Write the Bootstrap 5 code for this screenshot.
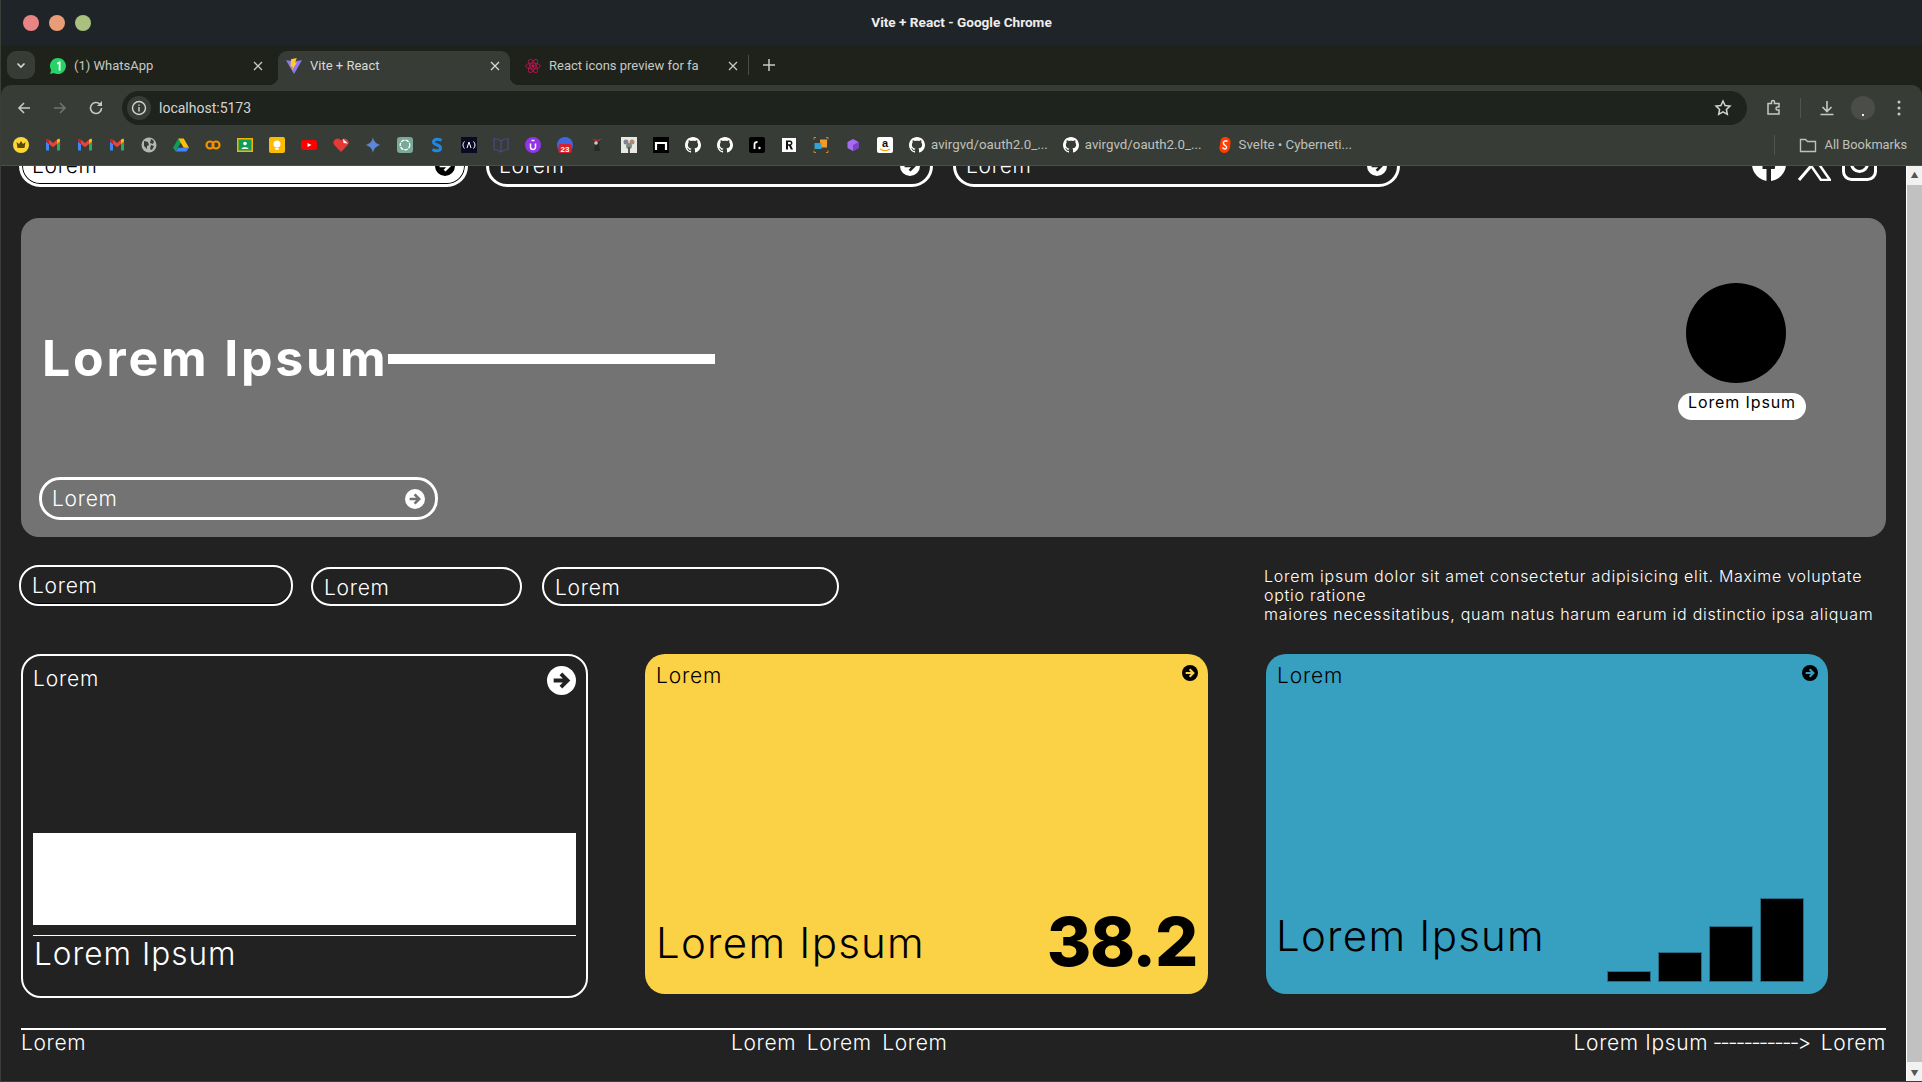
<!doctype html>
<html lang="en">
<head>
<meta charset="utf-8">
<title>Vite + React</title>
<link href="https://cdn.jsdelivr.net/npm/bootstrap@5.3.0/dist/css/bootstrap.min.css" rel="stylesheet">
<style>
html,body{height:100%;margin:0;overflow:hidden;background:#222}
body{font-family:Inter,"Noto Sans",sans-serif;color:#fff}
.win{height:1082px;border-left:1px solid #3a3d38;border-bottom:1px solid #3a3d38}
.chrome{font-family:Roboto,"Noto Sans",sans-serif;color:#c7c9c4;flex:none;background:#1e221b}
.titlebar{height:45px;background:#1f2428;position:relative;justify-content:center;align-items:center;font-size:13.6px;font-weight:700;color:#eee}
.lights{position:absolute;left:22px;top:15px;gap:10px}
.lights i{display:block;width:16px;height:16px;border-radius:50%}
.tabstrip{height:40px;background:#1e221b;padding:6px 0 0 6px;font-size:13px}
.chev{width:28px;height:28px;border-radius:9px;background:#383c36;margin-right:6px}
.tabx{height:34px;padding:0 11px 4px 8px;gap:8px;border-radius:9px 9px 0 0;position:relative}
.tabx.on{background:#383c36;color:#d8d9d6}
.tabx.on::before,.tabx.on::after{content:"";position:absolute;bottom:0;width:9px;height:9px}
.tabx.on::before{left:-9px;background:radial-gradient(circle at 0 0,transparent 9px,#383c36 9.500px)}
.tabx.on::after{right:-9px;background:radial-gradient(circle at 100% 0,transparent 9px,#383c36 9.500px)}
.tabx .ttl{flex:1;white-space:nowrap;overflow:hidden}
.tabx svg{flex:none}
.t1{width:237px;padding-left:9px;padding-right:15px}.t2{width:232px;padding-right:10px}.t3{width:238px;padding-left:15px;padding-right:10px}
.newt{border-left:1px solid #4a4d48;height:20px;width:1px;margin:0 10px 6px 0}
.toolbar{height:40px;background:#383c36;padding:6px 0 0 5px;border-radius:10px 10px 0 0}
.navb{width:36px;justify-content:center}
.addr{height:34px;background:#1f231d;border-radius:17px;margin-left:8px;width:1625px;padding:0 15px 0 5px;font-size:14px;color:#d4d5d2}
.infoc{width:24px;height:24px;border-radius:50%;background:#383c36;margin-right:8px;justify-content:center}
.tools{margin-left:18px;gap:0}
.bmbar{height:41px;background:#383c36;border-bottom:1px solid #4b4e49;padding:0 0 0 4px;font-size:13.3px;color:#bfc1bc}
.bm{width:32px;flex:none;justify-content:center;display:flex}
.bmt{gap:6px;margin-right:15px;white-space:nowrap}
.allb{margin-left:auto;gap:8px;padding-right:15px;white-space:nowrap;font-size:12.8px}
.allsep{width:1px;height:20px;background:#50534e;margin-right:16px}
.stage{min-height:0}
.pagex{flex:1;overflow:hidden;background:#222;padding:0 20px 0 18px;min-width:0;letter-spacing:.045em;font-variant-ligatures:none;font-feature-settings:"calt" 0,"liga" 0;font-weight:300}
.scrollx{width:16px;flex:none;background:#f1f1f1;border-left:1px solid #fff}
.scrollx .thumb{flex:1;background:#c1c1c1;margin:2px 0}
.arrowx{height:17px;justify-content:center;align-items:center;color:#555;font-size:8px;line-height:1}
.navrow{margin-top:-22px;height:43px;gap:18px;padding-right:9px}
.bigpill{width:447px;height:43px;border:3px solid #fff;border-radius:21px;padding:0 10px 0 10px;font-size:21px;flex:none}
.bigpill.sel{background:#fff;color:#000;border-width:3px;box-shadow:inset 0 0 0 1px #000;width:449px;margin-right:0}
.socials{margin-left:auto;gap:11px;align-self:flex-end;margin-bottom:6px}
.hero{margin:31px 0 0 2px;height:319px;background:#737373;border-radius:18px;padding:0 80px 17px 18px}
.herotitle{font-size:50px;font-weight:700;line-height:58px;margin:0;letter-spacing:.056em;padding-left:3px}
.heroline{width:327px;height:10px;background:#fff;margin-top:2px}
.headrow{margin-top:111px}
.herobtn{width:399px;margin-top:auto}
.avatar{width:100px;height:100px;border-radius:50%;background:#000;margin:65px 0 10px 8px}
.namepill{width:128px;height:27px;background:#fff;color:#000;border-radius:14px;font-size:16px;line-height:19px;text-align:center;padding-top:0;letter-spacing:.055em;font-weight:400}
.midrow{margin-top:28px;height:61px}
.tag{height:39px;border:2px solid #fff;border-radius:20px;padding-left:11px;font-size:21px;line-height:37px;flex:none;margin-top:2px}
.tag.a{width:274px;height:41px;margin-top:0;box-shadow:inset 0 -1px 0 #000;margin-right:18px}
.tag.b{width:211px;margin-right:20px}
.tag.c{width:297px}
.para{margin:0 0 0 auto;width:622px;padding-right:6px;font-size:16px;line-height:19px;margin-top:2px;letter-spacing:.73px}
.cards{margin-top:28px;margin-left:2px}
.cardx{flex:none;position:relative;border-radius:20px}
.cardx .lab{font-size:21px;line-height:26px;letter-spacing:.04em}
.cone{width:567px;height:344px;border:2px solid #fff;padding:10px;margin-right:57px}
.cone .arrbig{position:absolute;right:10px;top:10px}
.whiteb{height:92px;background:#fff;margin-top:141px}
.onehr{height:1px;background:#fff;margin-top:10px}
.onet{font-size:31.5px;line-height:36px;margin-top:0;padding-left:1px;letter-spacing:.032em}
.csol{width:563px;height:340px;color:#000;padding:9px 11px}
.csol .arrsm{position:absolute;right:10px;top:11px}
.yel{background:#fbd146;margin-right:58px}
.blu{background:#37a0c1;width:562px}
.big{font-size:42px;line-height:48px;letter-spacing:.03em}
.yel .big{padding-bottom:9px}
.yel .lowr{position:absolute;left:11px;right:11px;bottom:18px}
.num{font-size:68px;font-weight:800;line-height:70px;letter-spacing:-.02em}
.blu .lowt{position:absolute;left:10px;bottom:34px}
.bars{position:absolute;left:341px;bottom:12px;height:83px;gap:7px}
.bars i{display:block;width:44px;background:#000;border:1px solid #2a6e85}
.footx{margin:30px 0 0 2px;border-top:2px solid #fff;font-size:21px;line-height:26px;padding-top:0;position:relative;letter-spacing:.03em}
.fmid{position:absolute;left:710px;top:0;gap:10.500px}
.dashes{letter-spacing:-1.800px;margin:0 5px 0 -2px}
</style>
</head>
<body>
<svg width="0" height="0" class="position-absolute">
<symbol id="arr" viewBox="0 0 24 24"><circle cx="12" cy="12" r="12" fill="currentColor"/><path d="M5.500 12h11M11.500 6.500l5.500 5.500-5.500 5.500" fill="none" stroke="var(--ar,#222)" stroke-width="3.200"/></symbol>
<symbol id="gh" viewBox="0 0 16 16"><path fill="#fff" d="M8 0C3.600 0 0 3.600 0 8c0 3.500 2.300 6.500 5.500 7.600.4.100.5-.2.500-.4v-1.400c-2.200.5-2.700-1-2.700-1-.4-.9-.9-1.200-.9-1.200-.7-.5.100-.5.100-.5.800.1 1.200.8 1.200.8.700 1.200 1.900.9 2.300.7.100-.5.300-.9.500-1.100-1.800-.2-3.600-.9-3.600-4 0-.9.300-1.600.8-2.100-.1-.2-.4-1 .1-2.100 0 0 .7-.2 2.200.8.600-.2 1.300-.3 2-.3s1.400.1 2 .3c1.500-1 2.200-.8 2.200-.8.400 1.100.2 1.900.1 2.100.5.600.8 1.300.8 2.100 0 3.100-1.900 3.700-3.700 3.900.3.3.6.8.6 1.500v2.200c0 .2.100.5.600.4C13.700 14.500 16 11.500 16 8c0-4.400-3.600-8-8-8z"/></symbol>
<symbol id="gm" viewBox="0 0 16 16"><path fill="#4285f4" d="M1 13.500h3V7L1 4.500z"/><path fill="#34a853" d="M12 13.500h3v-9L12 7z"/><path fill="#ea4335" d="M4 7V2.800L8 6l4-3.200V7L8 10.200z"/><path fill="#fbbc04" d="M12 2.800 13 2c1-.7 2-.1 2 1v1.500L12 7z"/><path fill="#c5221f" d="M1 4.500V3c0-1.100 1-1.700 2-1l1 .8V7z"/></symbol>
</svg>
<div class="win d-flex flex-column">
<header class="chrome">
  <div class="titlebar d-flex">
    <div class="lights d-flex"><i style="background:#e98484"></i><i style="background:#e89d77"></i><i style="background:#a9c07f"></i></div>
    Vite + React - Google Chrome
  </div>
  <div class="tabstrip d-flex align-items-start">
    <div class="chev d-flex align-items-center justify-content-center"><svg width="12" height="12" viewBox="0 0 12 12"><path d="M2.500 4.500 6 8l3.500-3.500" fill="none" stroke="#d8d9d6" stroke-width="1.600"/></svg></div>
    <div class="tabx t1 d-flex align-items-center"><svg width="16" height="16" viewBox="0 0 16 16"><path fill="#25d366" d="M8 0a8 8 0 0 0-6.800 12.200L0 16l3.900-1.100A8 8 0 1 0 8 0z"/><path fill="#fff" d="M8.700 12.500V5.700L7 6.500V5L9 3.500h1.500v9z"/></svg><span class="ttl">(1) WhatsApp</span><svg width="10" height="10" viewBox="0 0 10 10"><path d="M1 1l8 8M9 1 1 9" stroke="#c7c9c4" stroke-width="1.300"/></svg></div>
    <div class="tabx t2 on d-flex align-items-center"><svg width="16" height="16" viewBox="0 0 16 16"><path fill="#8d78f8" d="M0 2.200 8 16 16 2.200l-4 .6-4 .5-4-.5z"/><path fill="#ffc928" d="M10.800 0 5 1.300l-.5 7.500 2-.5-.4 4 4.900-7.800-2.100.4z"/></svg><span class="ttl">Vite + React</span><svg width="10" height="10" viewBox="0 0 10 10"><path d="M1 1l8 8M9 1 1 9" stroke="#d8d9d6" stroke-width="1.300"/></svg></div>
    <div class="tabx t3 d-flex align-items-center"><svg width="16" height="16" viewBox="0 0 16 16" fill="none" stroke="#b3154e" stroke-width=".9"><circle cx="8" cy="8" r="1.300" fill="#b3154e"/><ellipse cx="8" cy="8" rx="7.300" ry="2.900"/><ellipse cx="8" cy="8" rx="7.300" ry="2.900" transform="rotate(60 8 8)"/><ellipse cx="8" cy="8" rx="7.300" ry="2.900" transform="rotate(120 8 8)"/></svg><span class="ttl">React icons preview for fa</span><svg width="10" height="10" viewBox="0 0 10 10"><path d="M1 1l8 8M9 1 1 9" stroke="#c7c9c4" stroke-width="1.300"/></svg></div>
    <div class="newt mt-1"></div>
    <svg class="mt-1" width="20" height="20" viewBox="0 0 20 20"><path d="M10 4v12M4 10h12" stroke="#c7c9c4" stroke-width="1.500"/></svg>
  </div>
  <div class="toolbar d-flex align-items-center">
    <div class="navb d-flex"><svg width="16" height="16" viewBox="0 0 16 16" fill="none" stroke="#c7c9c4" stroke-width="1.600"><path d="M14 8H3M8 3 3 8l5 5"/></svg></div>
    <div class="navb d-flex"><svg width="16" height="16" viewBox="0 0 16 16" fill="none" stroke="#71746e" stroke-width="1.600"><path d="M2 8h11M8 3l5 5-5 5"/></svg></div>
    <div class="navb d-flex"><svg width="16" height="16" viewBox="0 0 16 16" fill="none" stroke="#c7c9c4" stroke-width="1.600"><path d="M13.500 8A5.500 5.500 0 1 1 11.800 4"/><path fill="#c7c9c4" stroke="none" d="M14 1v5H9z"/></svg></div>
    <div class="addr d-flex align-items-center">
      <div class="infoc d-flex align-items-center"><svg width="16" height="16" viewBox="0 0 16 16" fill="none" stroke="#d4d5d2" stroke-width="1.400"><circle cx="8" cy="8" r="6.500"/><path d="M8 7v4.500M8 4.500v1.300"/></svg></div>
      localhost:5173
      <svg class="ms-auto" width="18" height="18" viewBox="0 0 18 18" fill="none" stroke="#d4d5d2" stroke-width="1.500"><path d="m9 2 2.100 4.500 4.900.6-3.600 3.300.9 4.900L9 12.900l-4.300 2.400.9-4.900L2 7.100l4.900-.6z"/></svg>
    </div>
    <div class="tools d-flex align-items-center">
      <svg width="18" height="18" viewBox="0 0 18 18" fill="none" stroke="#c7c9c4" stroke-width="1.500"><path d="M3 4.500h3.500V3a1.500 1.500 0 0 1 3 0v1.500H14V8h-1.500a1.500 1.500 0 0 0 0 3H14v4H3z"/></svg>
      <div style="width:1px;height:20px;background:#50534e;margin:0 17px 0 17px"></div>
      <svg width="18" height="18" viewBox="0 0 18 18" fill="none" stroke="#c7c9c4" stroke-width="1.600"><path d="M9 2v10M4.500 8 9 12.500 13.500 8M2.500 15.500h13"/></svg>
      <div class="d-flex align-items-end justify-content-center" style="width:24px;height:24px;border-radius:50%;background:#4a4d48;margin-left:15px"><i class="d-block mb-1" style="width:2px;height:2px;background:#eee"></i></div>
      <svg style="margin-left:22px" width="4" height="16" viewBox="0 0 4 16" fill="#c7c9c4"><circle cx="2" cy="2" r="1.500"/><circle cx="2" cy="8" r="1.500"/><circle cx="2" cy="14" r="1.500"/></svg>
    </div>
  </div>
  <div class="bmbar d-flex align-items-center">
    <span class="bm"><svg width="16" height="16" viewBox="0 0 16 16"><circle cx="8" cy="8" r="8" fill="#fdd835"/><path fill="#5d4a06" d="M3.500 5 6 7l2-3 2 3 2.500-2-1 6h-7z"/></svg></span>
    <span class="bm"><svg width="16" height="16"><use href="#gm"/></svg></span>
    <span class="bm"><svg width="16" height="16"><use href="#gm"/></svg></span>
    <span class="bm"><svg width="16" height="16"><use href="#gm"/></svg></span>
    <span class="bm"><svg width="16" height="16" viewBox="0 0 16 16"><circle cx="8" cy="8" r="7.500" fill="#b4b6b3"/><path fill="#383c36" d="M3 4l4 1 1 3-2 1v3L3 9zm7-2 3 2-1 3-3-1zm0 6 3 1-2 4-2-1z"/></svg></span>
    <span class="bm"><svg width="16" height="16" viewBox="0 0 16 16"><path fill="#0f9d58" d="M5.300 1.500 0 10.700l2.600 3.800L8 5.500z"/><path fill="#4285f4" d="M2.600 14.500h10.700l2.700-3.800H5.300z"/><path fill="#ffc107" d="M5.300 1.500h5.400l5.300 9.200h-5.300z"/></svg></span>
    <span class="bm"><svg width="16" height="16" viewBox="0 0 16 16" fill="none" stroke="#f29100" stroke-width="2.200"><circle cx="5" cy="8" r="3.500"/><circle cx="11" cy="8" r="3.500"/></svg></span>
    <span class="bm"><svg width="16" height="16" viewBox="0 0 16 16"><rect y="1" width="16" height="14" fill="#f4b400"/><rect x="1.500" y="2.500" width="13" height="11" fill="#0f9d58"/><circle cx="8" cy="6.500" r="1.800" fill="#fff"/><path fill="#fff" d="M4.500 12c0-2.500 7-2.500 7 0z"/></svg></span>
    <span class="bm"><svg width="16" height="16" viewBox="0 0 16 16"><rect width="16" height="16" rx="2" fill="#fbbc04"/><circle cx="8" cy="7" r="3.500" fill="#fff"/><rect x="6.300" y="11" width="3.400" height="1.800" fill="#fff"/></svg></span>
    <span class="bm"><svg width="16" height="16" viewBox="0 0 16 16"><rect y="3" width="16" height="10" rx="2.500" fill="#f00"/><path fill="#fff" d="m6.500 6 4 2-4 2z"/></svg></span>
    <span class="bm"><svg width="16" height="16" viewBox="0 0 16 16"><path fill="#e53935" d="M8 15 1.200 8A4 4 0 0 1 8 3.500 4 4 0 0 1 14.800 8z"/><path fill="#fff" d="M10 2 15 6.500 10.500 6z"/></svg></span>
    <span class="bm"><svg width="16" height="16" viewBox="0 0 16 16"><path fill="#5c87d6" d="M8 0c.6 4.500 3.400 7.300 8 8-4.600.7-7.400 3.500-8 8-.6-4.500-3.400-7.300-8-8 4.600-.7 7.400-3.500 8-8z"/></svg></span>
    <span class="bm"><svg width="16" height="16" viewBox="0 0 16 16"><rect width="16" height="16" rx="3" fill="#7aa899"/><circle cx="8" cy="8" r="4.800" fill="none" stroke="#fff" stroke-width="1.300" stroke-dasharray="3.500 1"/></svg></span>
    <span class="bm"><svg width="16" height="16" viewBox="0 0 16 16"><path fill="none" stroke="#1e88e5" stroke-width="3" d="M12.500 3.500C10 1.500 5 1.500 4.500 5c-.3 3 7 2.500 7 6 0 3.500-5 3.500-8 1.500"/></svg></span>
    <span class="bm"><svg width="16" height="16" viewBox="0 0 16 16"><rect width="16" height="16" fill="#0a0a23"/><path fill="none" stroke="#fff" stroke-width="1" d="M3.500 4.500C1.500 6.500 1.500 9.500 3.500 11.500M12.500 4.500c2 2 2 5 0 7M6 11l2-6 2 6"/></svg></span>
    <span class="bm"><svg width="16" height="16" viewBox="0 0 16 16" fill="none" stroke="#54468a" stroke-width="1.100"><path d="M8 4C6 2.500 3.500 1.500 1 1.500v11c2.500 0 5 1 7 2.500 2-1.500 4.500-2.500 7-2.500v-11C12.500 1.500 10 2.500 8 4zv11"/></svg></span>
    <span class="bm"><svg width="16" height="16" viewBox="0 0 16 16"><circle cx="8" cy="8" r="8" fill="#9333ea"/><path fill="none" stroke="#fff" stroke-width="1.500" d="M5.500 6.500v3.500a2.500 2.500 0 0 0 5 0V6.500M6.500 3.500h3"/></svg></span>
    <span class="bm"><svg width="16" height="16" viewBox="0 0 16 16"><circle cx="8" cy="8" r="8" fill="#3f68e0"/><rect x="1.500" y="7" width="13" height="9" rx="1.500" fill="#d5202f"/><text x="8" y="14.500" font-size="8" font-family="Liberation Sans,sans-serif" font-weight="700" fill="#fff" text-anchor="middle">23</text></svg></span>
    <span class="bm"><svg width="16" height="16" viewBox="0 0 16 16"><path fill="#2b2b2b" d="M4 3h8l-2 4 1 7H5l1-7z"/><path fill="#a33" d="M3 1.500l5 1.500 5-1.500-3 3H6z"/><circle cx="7" cy="6" r="1.800" fill="#ccc"/></svg></span>
    <span class="bm"><svg width="16" height="16" viewBox="0 0 16 16"><rect width="16" height="16" fill="#e8e8e4"/><circle cx="5" cy="5" r="2.500" fill="#8a7f8f"/><circle cx="11" cy="5" r="2.500" fill="#b08a74"/><circle cx="8" cy="9" r="3" fill="#7b8f86"/><rect x="7" y="10" width="2" height="6" fill="#555"/></svg></span>
    <span class="bm"><svg width="16" height="16" viewBox="0 0 16 16"><rect width="16" height="16" fill="#000"/><path fill="none" stroke="#fff" stroke-width="2.200" d="M3 13V6h10v7"/></svg></span>
    <span class="bm"><svg width="16" height="16"><use href="#gh"/></svg></span>
    <span class="bm"><svg width="16" height="16"><use href="#gh"/></svg></span>
    <span class="bm"><svg width="16" height="16" viewBox="0 0 16 16"><rect width="16" height="16" rx="2" fill="#000"/><path fill="none" stroke="#fff" stroke-width="1.800" d="M5.500 12V7c0-1.500 1-2 3-2"/><circle cx="10.500" cy="11" r="1.200" fill="#fff"/></svg></span>
    <span class="bm"><svg width="16" height="16" viewBox="0 0 16 16"><rect x="1" y="1" width="14" height="14" fill="#fff"/><path fill="#111" d="M5 3.500h4a2.500 2.500 0 0 1 1 4.800L12 12.500H9.800L8 8.800H7v3.700H5zM7 5v2.300h1.800a1.100 1.100 0 0 0 0-2.300z"/></svg></span>
    <span class="bm"><svg width="16" height="16" viewBox="0 0 16 16"><rect x="7" y="2.500" width="7" height="8" fill="#f29a2e"/><rect x="1.500" y="6" width="7" height="6" fill="#36a2d0"/><path fill="none" stroke="#c98a2c" d="M1 2.500V.5h2M13 .5h2v2M1 13.500v2h2M15 13.500v2h-2"/></svg></span>
    <span class="bm"><svg width="16" height="16" viewBox="0 0 16 16"><path fill="#a66cf0" d="M8 2l5.500 3v6L8 14l-5.500-3V5z"/><path fill="#7a3fd0" d="M8 8l5.500-3v6L8 14z"/></svg></span>
    <span class="bm"><svg width="16" height="16" viewBox="0 0 16 16"><rect width="16" height="16" rx="2" fill="#fff"/><text x="8" y="10" font-size="11" font-weight="700" font-family="Liberation Sans,sans-serif" text-anchor="middle" fill="#111">a</text><path fill="none" stroke="#f90" stroke-width="1.300" d="M3 12c3 2 7 2 10 0"/></svg></span>
    <span class="d-flex align-items-center bmt" style="margin-left:8px"><svg width="16" height="16"><use href="#gh"/></svg>avirgvd/oauth2.0_...</span>
    <span class="d-flex align-items-center bmt"><svg width="16" height="16"><use href="#gh"/></svg>avirgvd/oauth2.0_...</span>
    <span class="d-flex align-items-center bmt"><svg width="16" height="16" viewBox="0 0 16 16"><path fill="#ff3e00" d="M8 0c4 0 6 3 5.500 6L13 11c-1 4-5 6-8 4.500C2 14 2 10 3 8l.5-4C4 1.500 6 0 8 0z"/><path fill="none" stroke="#fff" stroke-width="1.500" d="M10.500 4.500C8.500 3 6 4.500 6.500 6.500S10.500 9 9.500 11 6 11.500 5.500 10.500"/></svg>Svelte • Cyberneti...</span>
    <span class="d-flex align-items-center allb"><span class="allsep"></span><svg width="18" height="16" viewBox="0 0 18 16" fill="none" stroke="#bfc1bc" stroke-width="1.400"><path d="M1.500 2.500h5l2 2h8v10h-15z"/></svg>All Bookmarks</span>
  </div>
</header>
<div class="stage d-flex flex-grow-1">
<main class="pagex">
  <div class="navrow d-flex">
    <div class="bigpill sel d-flex align-items-center justify-content-between">Lorem<svg width="20" height="20" style="--ar:#fff"><use href="#arr"/></svg></div>
    <div class="bigpill d-flex align-items-center justify-content-between">Lorem<svg width="20" height="20"><use href="#arr"/></svg></div>
    <div class="bigpill d-flex align-items-center justify-content-between" style="margin-left:2px">Lorem<svg width="20" height="20"><use href="#arr"/></svg></div>
    <div class="socials d-flex align-items-end">
      <svg width="34" height="34" viewBox="0 0 34 34"><circle cx="17" cy="17" r="17" fill="#fff"/><path fill="#222" d="M14.500 34V22h-4v-5h4v-4c0-4 2.500-6 6-6h3.500v4.500H21c-1.500 0-2 .8-2 2V17h4.500l-.8 5H19v12z"/></svg>
      <svg width="34" height="35" viewBox="0 0 34 35"><path d="M1 1h9l23 33h-9z" fill="none" stroke="#fff" stroke-width="2.500"/><path d="M31 1 19 15M14 20 2 34" stroke="#fff" stroke-width="3"/></svg>
      <svg width="35" height="35" viewBox="0 0 35 35" fill="none" stroke="#fff" stroke-width="3"><rect x="1.500" y="1.500" width="32" height="32" rx="8"/><circle cx="17.500" cy="17.500" r="8"/></svg>
    </div>
  </div>
  <section class="hero d-flex justify-content-between">
    <div class="d-flex flex-column">
      <div class="headrow d-flex align-items-center"><h1 class="herotitle">Lorem Ipsum</h1><div class="heroline"></div></div>
      <div class="bigpill herobtn d-flex align-items-center justify-content-between" style="--ar:#737373">Lorem<svg width="20" height="20"><use href="#arr"/></svg></div>
    </div>
    <div>
      <div class="avatar"></div>
      <div class="namepill">Lorem Ipsum</div>
    </div>
  </section>
  <section class="midrow d-flex align-items-start">
    <div class="tag a">Lorem</div>
    <div class="tag b">Lorem</div>
    <div class="tag c">Lorem</div>
    <p class="para">Lorem ipsum dolor sit amet consectetur adipisicing elit. Maxime voluptate optio ratione<br>maiores necessitatibus, quam natus harum earum id distinctio ipsa aliquam</p>
  </section>
  <section class="cards d-flex align-items-start">
    <article class="cardx cone">
      <div class="lab">Lorem</div>
      <svg class="arrbig" width="29" height="29"><use href="#arr"/></svg>
      <div class="whiteb"></div>
      <div class="onehr"></div>
      <div class="onet">Lorem Ipsum</div>
    </article>
    <article class="cardx csol yel">
      <div class="lab">Lorem</div>
      <svg class="arrsm" width="16" height="16" style="--ar:#fbd146"><use href="#arr"/></svg>
      <div class="lowr d-flex justify-content-between align-items-end"><div class="big">Lorem Ipsum</div><div class="num">38.2</div></div>
    </article>
    <article class="cardx csol blu">
      <div class="lab">Lorem</div>
      <svg class="arrsm" width="16" height="16" style="--ar:#37a0c1"><use href="#arr"/></svg>
      <div class="big lowt">Lorem Ipsum</div>
      <div class="bars d-flex align-items-end"><i style="height:11px"></i><i style="height:30px"></i><i style="height:56px"></i><i style="height:84px"></i></div>
    </article>
  </section>
  <footer class="footx d-flex justify-content-between">
    <span>Lorem</span>
    <span class="fmid d-flex"><span>Lorem</span><span>Lorem</span><span>Lorem</span></span>
    <span>Lorem Ipsum <span class="dashes">-----------&gt;</span> Lorem</span>
  </footer>
</main>
<aside class="scrollx d-flex flex-column">
  <div class="arrowx d-flex">▲</div>
  <div class="thumb"></div>
  <div class="arrowx d-flex">▼</div>
</aside>
</div>
</div>
</body>
</html>
